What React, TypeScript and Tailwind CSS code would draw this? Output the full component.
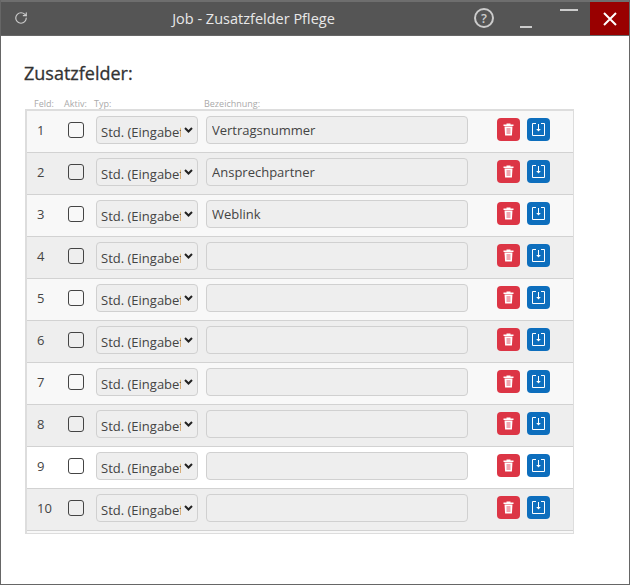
import { RotateCw } from 'lucide-react'

type Feld = { nr: number; name: string; bg: string }

const NAMES = ['Vertragsnummer', 'Ansprechpartner', 'Weblink']
const ROW_BG = ['bg-[#f8f8f8]', 'bg-[#eeeeee]', 'bg-[#f8f8f8]', 'bg-[#eeeeee]', 'bg-[#f8f8f8]', 'bg-[#eeeeee]', 'bg-[#f8f8f8]', 'bg-[#eeeeee]', 'bg-white', 'bg-[#eeeeee]']

const FELDER: Feld[] = ROW_BG.map((bg, i) => ({ nr: i + 1, name: NAMES[i] ?? '', bg }))

function TrashIcon() {
  return (
    <svg width="11" height="13" viewBox="0 0 11 13">
      <rect x="0.5" y="1.5" width="10" height="1.5" fill="#fff" />
      <rect x="3.5" y="0.5" width="4" height="1.5" fill="#fff" />
      <path d="M1.5 3.5h8l-.6 9H2.1z" fill="#fff" />
      <rect x="3.5" y="5" width="4" height="6" fill="#f0a6b0" />
    </svg>
  )
}

function SaveIcon() {
  return (
    <svg width="13" height="13" viewBox="0 0 13 13" fill="none">
      <path d="M4 .5H.5v12h12V.5H9" stroke="#fff" strokeWidth="1" />
      <path d="M6.5 1v5" stroke="#fff" strokeWidth="1" />
      <path d="M4.2 6h4.6L6.5 8.5z" fill="#fff" />
    </svg>
  )
}

function Row({ feld }: { feld: Feld }) {
  return (
    <div className={`flex h-[42px] items-center border-b border-[#d2d2d2] pb-[3px] ${feld.bg}`}>
      <span className="w-[41px] pt-[2px] pl-[10px] text-[13px] text-[#444]">{feld.nr}</span>
      <input type="checkbox" className="h-4 w-4 appearance-none rounded-[3px] border border-[#444] bg-transparent" />
      <div className="relative ml-[12px] h-[28px] w-[102px]">
        <select className="h-full w-full appearance-none rounded-[4px] border border-[#d0d0d0] bg-[#eeeeee] pt-[6px] pr-[16px] pl-[4px] text-[13px] text-[#444] outline-none">
          <option>Std. (Eingabefeld)</option>
        </select>
        <svg className="absolute top-[11px] right-[5px]" width="9" height="6" viewBox="0 0 9 6" fill="none">
          <path d="M1 1l3.5 3.5L8 1" stroke="#222" strokeWidth="2" />
        </svg>
      </div>
      <input
        type="text"
        readOnly
        value={feld.name}
        className="ml-2 h-[28px] w-[262px] rounded-[4px] border border-[#d0d0d0] bg-[#eeeeee] px-[5px] text-[13px] text-[#444] outline-none"
      />
      <button type="button" className="mb-px ml-[29px] flex h-[23px] w-[23px] items-center justify-center rounded-[4px] bg-[#dc3545]">
        <TrashIcon />
      </button>
      <button type="button" className="mb-px ml-[7px] flex h-[23px] w-[23px] items-center justify-center rounded-[4px] bg-[#0d6ebd]">
        <SaveIcon />
      </button>
    </div>
  )
}

export default function App() {
  return (
    <div className="flex h-[585px] w-[630px] flex-col overflow-hidden border border-t-0 border-[#666] bg-white font-['Open_Sans',sans-serif]">
      <header className="-mx-px flex h-[36px] shrink-0 items-stretch border-t-2 border-b border-[#6e6e6e] border-b-[#666] bg-[#555555]">
        <div className="flex w-[42px] items-center justify-center pb-[2px]">
          <RotateCw size={14} color="#ccc" />
        </div>
        <div className="flex-1 pb-[1px] text-center text-[14.5px] leading-[33px] text-[#e8e8e8]">
          Job - Zusatzfelder Pflege
        </div>
        <div className="flex w-[40px] items-center justify-center pr-[2px] pb-[1px]">
          <span className="flex h-5 w-5 items-center justify-center rounded-full border-2 border-[#ccc] text-[13px] leading-none font-semibold text-[#ccc]">?</span>
        </div>
        <div className="flex w-[42px] items-end justify-center pb-[7px]">
          <span className="h-[2px] w-3 bg-[#ccc]" />
        </div>
        <div className="flex w-[43px] items-start justify-center pt-[7px]">
          <span className="h-[2px] w-[18px] bg-[#ccc]" />
        </div>
        <div className="flex w-[40px] items-center justify-center bg-[#990000]">
          <svg width="14" height="14" viewBox="0 0 14 14">
            <path d="M1 1l12 12M13 1L1 13" stroke="#fff" strokeWidth="2" />
          </svg>
        </div>
      </header>

      <main className="pt-[25px] pl-[22px]">
        <h1 className="ml-px text-[18px] leading-[24px] font-medium text-[#333] [-webkit-text-stroke:0.3px_#333]">Zusatzfelder:</h1>
        <div className="mt-[12px] flex h-[12px] text-[9px] leading-[13px] text-[#aaa]">
          <span className="ml-[11px] w-[30px]">Feld:</span>
          <span className="w-[30px]">Aktiv:</span>
          <span className="w-[110px]">Typ:</span>
          <span>Bezeichnung:</span>
        </div>
        <div className="ml-[2px] h-[425px] w-[549px] overflow-hidden border-2 border-r border-b border-[#dddddd] bg-[#f8f8f8]">
          {FELDER.map(f => <Row key={f.nr} feld={f} />)}
        </div>
      </main>
    </div>
  )
}
